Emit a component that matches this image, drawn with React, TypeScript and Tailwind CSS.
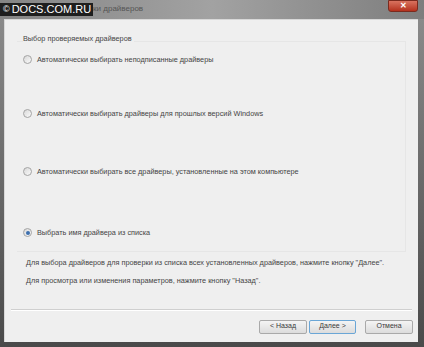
import React from "react";

const font = { fontFamily: '"Liberation Sans", Arial, sans-serif' };

function Radio({ checked }: { checked?: boolean }) {
  return (
    <span className="relative inline-block w-[9px] h-[9px] rounded-full border border-[#a4a4a4] bg-gradient-to-br from-[#d8d8d8] to-[#fafafa] shrink-0">
      {checked && (
        <span className="absolute left-[1.5px] top-[1.5px] w-[4px] h-[4px] rounded-full bg-[#3d6fae]" />
      )}
    </span>
  );
}

function Btn({ label, focus }: { label: string; focus?: boolean }) {
  return (
    <div
      className={`h-[14px] flex items-center justify-center rounded-[2px] border text-[7px] text-[#3a3a3a] bg-gradient-to-b from-[#f4f4f4] to-[#dcdcdc] ${
        focus ? "border-[#6aa6d6] from-[#eef6fc] to-[#d3e6f4]" : "border-[#a9a9a9]"
      }`}
    >
      {label}
    </div>
  );
}

export default function App() {
  return (
    <div
      className="w-[424px] h-[347px] bg-gradient-to-b from-[#8e8e8e] to-[#4a4a4a] relative overflow-hidden flex flex-col"
      style={font}
    >
      {/* title bar */}
      <div className="h-[19px] shrink-0 relative bg-gradient-to-r from-[#858585] via-[#a2a2a2] to-[#7e7e7e] flex items-start">
        <div className="mt-[3px] h-[13px] flex items-center bg-[#1e1e1e] pl-[3px] pr-[2px] text-[11px] text-white leading-none">
          <span className="text-[9px] mr-[2px]">©</span>
          <span>DOCS.COM.RU</span>
        </div>
        <span className="mt-[5px] text-[8px] text-[#555] leading-none">ки драйверов</span>
        <div className="absolute right-[6px] top-0 w-[30px] h-[12px] rounded-b-[3px] bg-gradient-to-b from-[#d9725f] to-[#b4301c] border border-[#7a2a1e] flex items-center justify-center text-white text-[8px] font-bold leading-none">
          ✕
        </div>
      </div>
      {/* client */}
      <div className="flex-1 ml-[4px] mr-[6px] mb-[5px] bg-[#efefef] border-l border-t border-[#d8d8d8] flex flex-col text-[#454545]">
        <div className="relative mx-[12px] mt-[21px] h-[211px] border-t border-r border-b border-[#e6e6e6] w-[389px]">
          <div className="absolute left-[6px] -top-[7px] text-[7.3px] leading-none bg-[#efefef] pr-[2px]">
            Выбор проверяемых драйверов
          </div>
          <div className="flex flex-col pl-[6px] text-[7.3px] leading-none">
            <div className="flex items-center gap-[5px] mt-[13px]">
              <Radio />
              <span>Автоматически выбирать неподписанные драйверы</span>
            </div>
            <div className="flex items-center gap-[5px] mt-[45px]">
              <Radio />
              <span>Автоматически выбирать драйверы для прошлых версий Windows</span>
            </div>
            <div className="flex items-center gap-[5px] mt-[49px]">
              <Radio />
              <span>Автоматически выбирать все драйверы, установленные на этом компьютере</span>
            </div>
            <div className="flex items-center gap-[5px] mt-[52px]">
              <Radio checked />
              <span>Выбрать имя драйвера из списка</span>
            </div>
          </div>
        </div>
        <div className="pl-[21px] text-[7.3px] leading-none mt-[7px]">
          Для выбора драйверов для проверки из списка всех установленных драйверов, нажмите кнопку "Далее".
        </div>
        <div className="pl-[21px] text-[7.3px] leading-none mt-[11px]">
          Для просмотра или изменения параметров, нажмите кнопку "Назад".
        </div>
        <div className="mx-[6px] mt-[24px] border-t border-[#cfcfcf] border-b-white border-b" />
        <div className="flex justify-end mt-[9px] mr-[5px] gap-[2px]">
          <div className="w-[48px]"><Btn label="< Назад" /></div>
          <div className="w-[47px]"><Btn label="Далее >" focus /></div>
          <div className="w-[48px] ml-[7px]"><Btn label="Отмена" /></div>
        </div>
      </div>
    </div>
  );
}
